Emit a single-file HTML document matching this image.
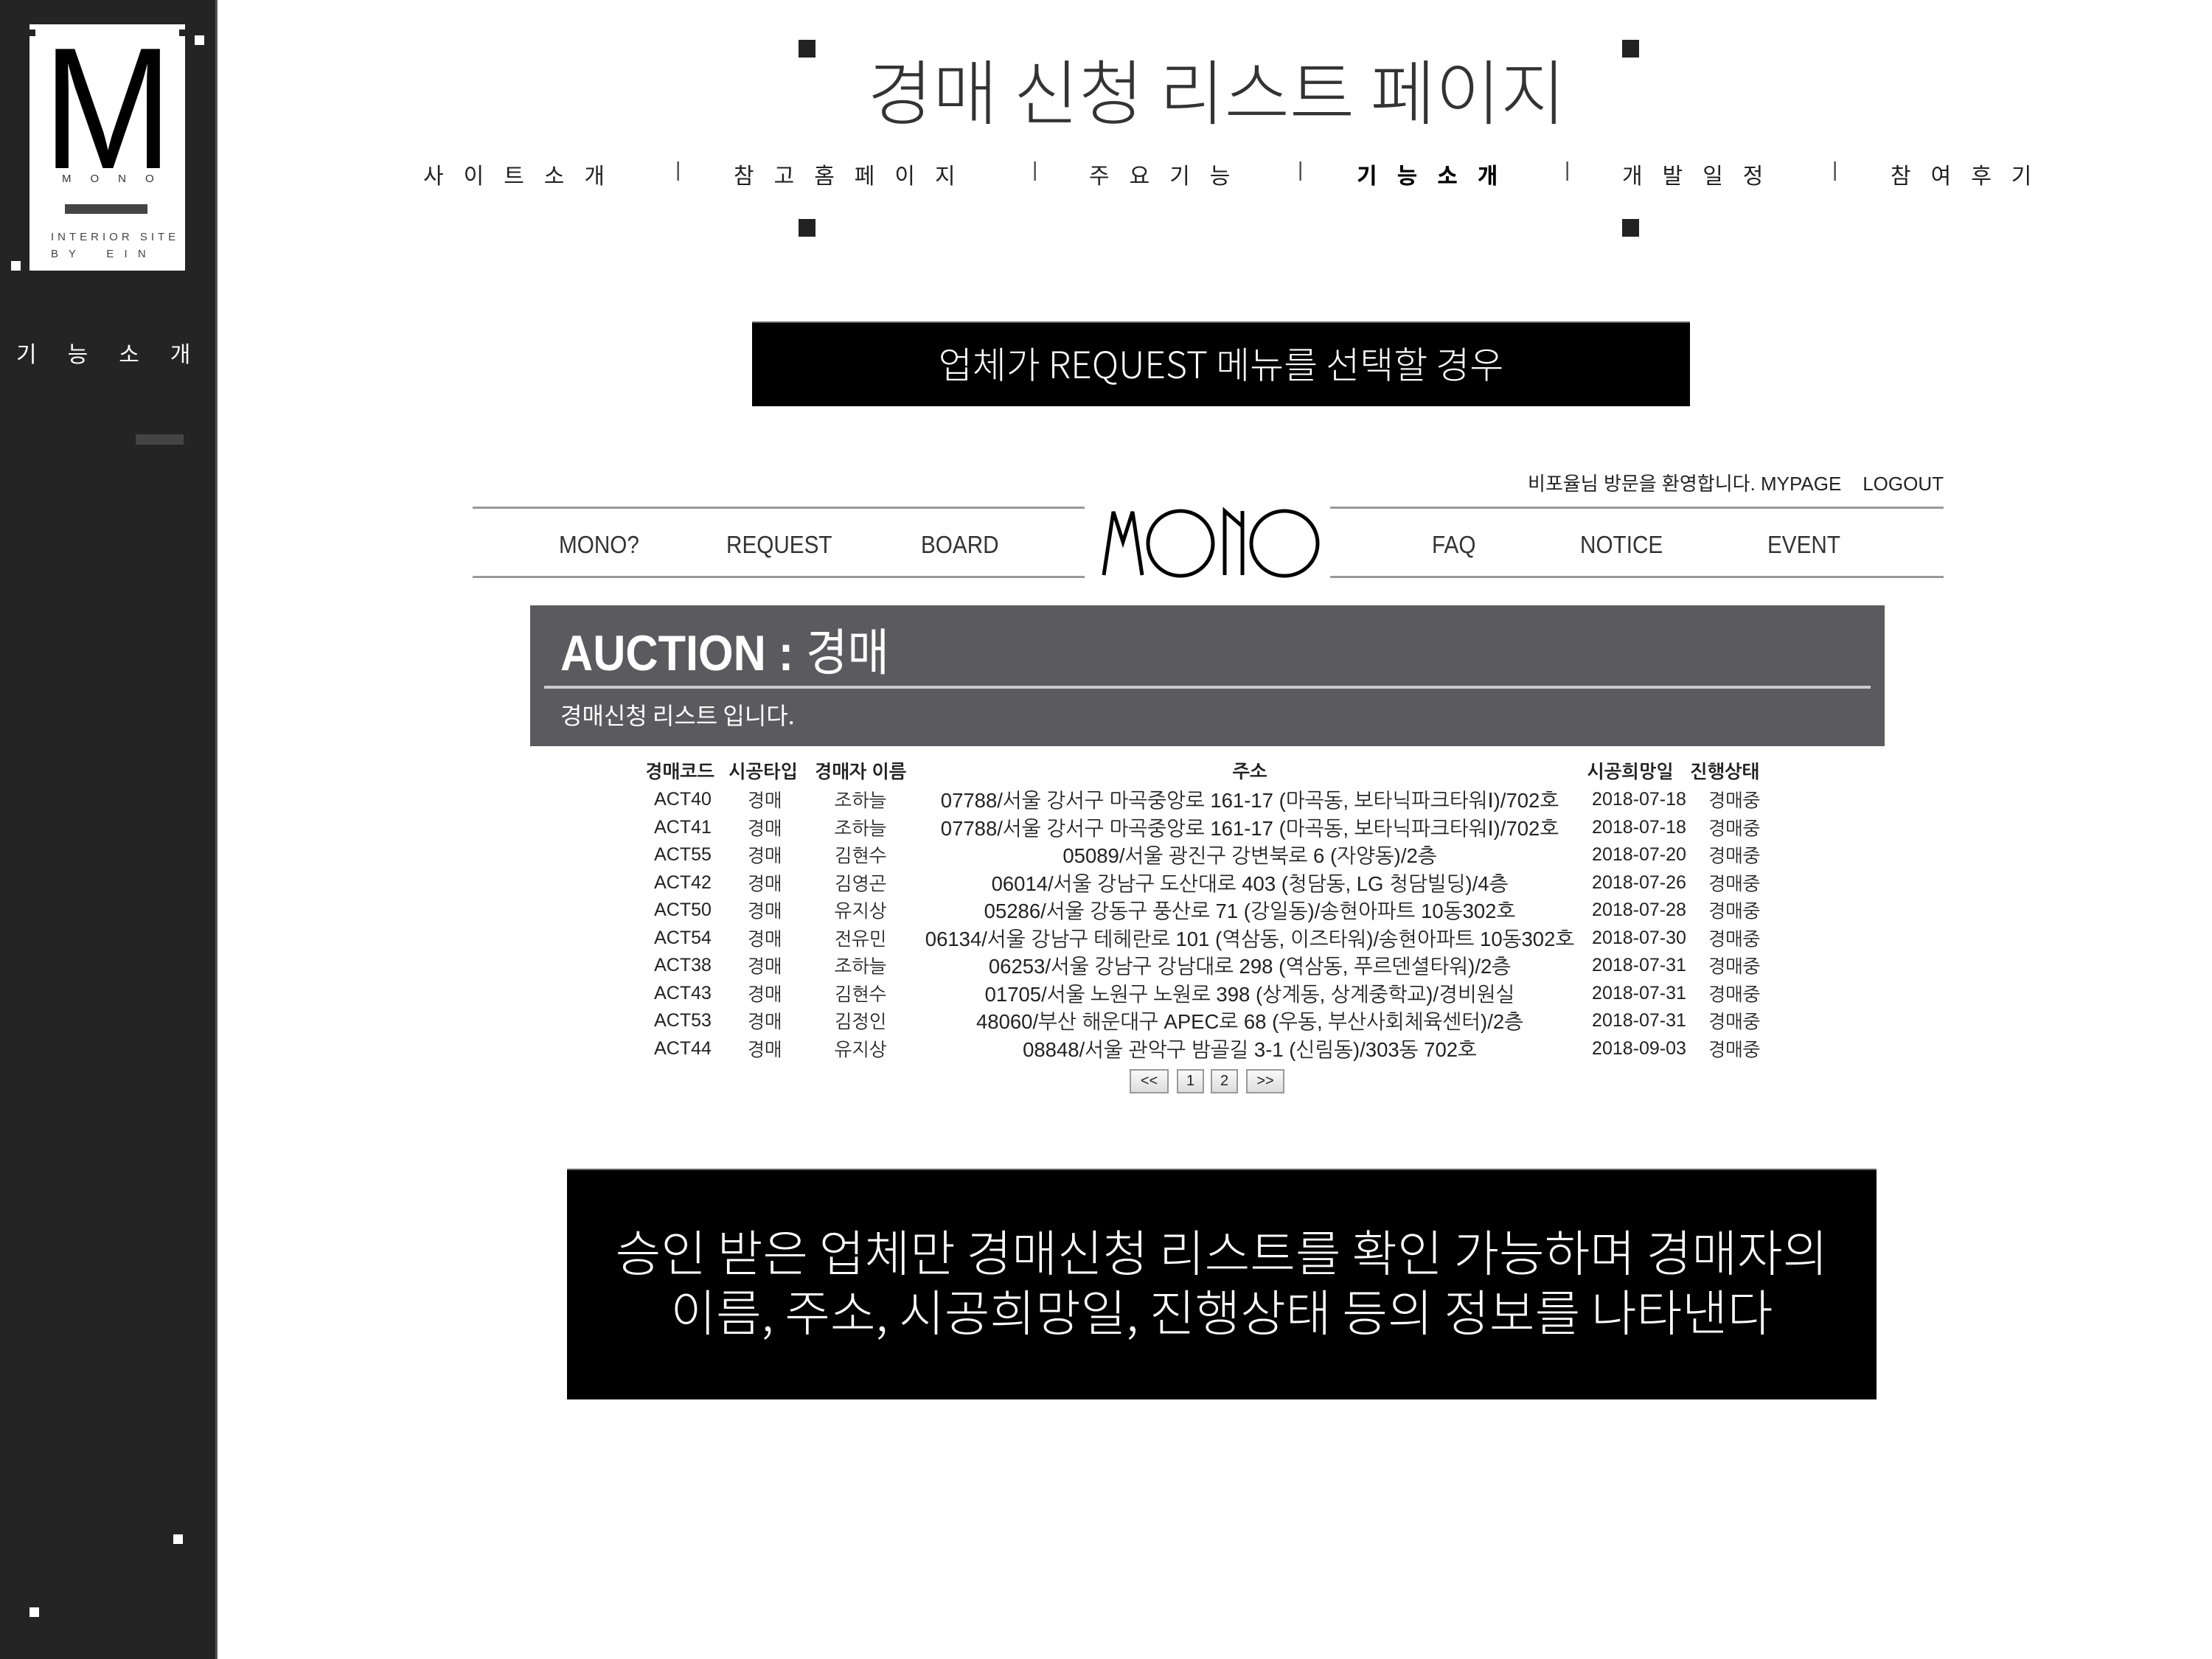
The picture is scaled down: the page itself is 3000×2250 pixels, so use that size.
<!DOCTYPE html>
<html><head><meta charset="utf-8"><style>
*{margin:0;padding:0;box-sizing:border-box}
body{width:3000px;height:2250px;position:relative;background:#fff;overflow:hidden;font-family:"Liberation Sans","Noto Sans CJK KR",sans-serif}
.a{position:absolute}
.sq{position:absolute;background:#fff;width:13px;height:13px}
.mk{position:absolute;background:#222;width:23px;height:24px}
.nav{position:absolute;top:214px;font-size:30px;letter-spacing:27px;color:#222;white-space:nowrap}
.sep{position:absolute;top:214px;font-size:28px;color:#444}
.mn{position:absolute;top:720px;font-size:33px;color:#333;transform:scaleX(.9);transform-origin:left}
.r{position:absolute;left:0;width:3000px;height:36px;font-size:25px;color:#222;font-family:"Liberation Sans","NanumGothic",sans-serif}
.r span{position:absolute;transform:translateX(-50%);white-space:nowrap}
.r span.ad{font-size:27.5px;top:-2px}
.h{font-weight:bold}
.pb{position:absolute;top:1450px;height:33px;border:2px solid #999;background:linear-gradient(#fafafa,#ddd);font-size:20px;text-align:center;line-height:29px;color:#222}
</style></head><body>
<div class="a" style="left:0;top:0;width:295px;height:2250px;background:#242424;border-right:3px solid #555"></div>
<div class="a" style="left:40px;top:33px;width:211px;height:334px;background:#fff"></div>
<div class="a" style="left:40px;top:40px;width:8px;height:9px;background:#242424"></div>
<div class="a" style="left:243px;top:40px;width:8px;height:9px;background:#242424"></div>
<div class="a" style="left:58px;top:62px;font-size:235px;line-height:170px;color:#000;font-weight:normal;transform:scaleX(.9);transform-origin:left">M</div>
<div class="a" style="left:84px;top:234px;font-size:15px;letter-spacing:26px;color:#333">MONO</div>
<div class="a" style="left:88px;top:277px;width:112px;height:13px;background:#444"></div>
<div class="a" style="left:69px;top:313px;font-size:15px;letter-spacing:5px;color:#444">INTERIOR SITE</div>
<div class="a" style="left:69px;top:336px;font-size:15px;letter-spacing:5px;color:#444;white-space:pre">B Y    E I N</div>
<div class="sq" style="left:264px;top:48px"></div>
<div class="sq" style="left:15px;top:354px"></div>
<div class="sq" style="left:235px;top:2081px"></div>
<div class="sq" style="left:40px;top:2180px"></div>
<div class="a" style="left:22px;top:456px;font-size:30px;letter-spacing:42px;color:#fff;font-family:'Noto Sans CJK KR',sans-serif">기능소개</div>
<div class="a" style="left:184px;top:589px;width:65px;height:14px;background:#444"></div>

<div class="mk" style="left:1083px;top:54px"></div>
<div class="mk" style="left:2200px;top:54px"></div>
<div class="mk" style="left:1083px;top:297px"></div>
<div class="mk" style="left:2200px;top:297px"></div>
<div class="a" style="left:1100px;top:55px;width:1100px;text-align:center;font-size:96px;line-height:130px;color:#333;font-family:'Noto Sans CJK KR',sans-serif;font-weight:300">경매 신청 리스트 페이지</div>

<div class="nav" style="left:574px">사이트소개</div>
<div class="sep" style="left:916px">|</div>
<div class="nav" style="left:995px">참고홈페이지</div>
<div class="sep" style="left:1400px">|</div>
<div class="nav" style="left:1477px">주요기능</div>
<div class="sep" style="left:1760px">|</div>
<div class="nav" style="left:1840px;font-weight:bold;color:#000">기능소개</div>
<div class="sep" style="left:2122px">|</div>
<div class="nav" style="left:2200px">개발일정</div>
<div class="sep" style="left:2485px">|</div>
<div class="nav" style="left:2564px">참여후기</div>

<div class="a" style="left:1020px;top:436px;width:1272px;height:115px;background:#000;border-top:2px solid #666;color:#fff;font-size:50px;text-align:center;line-height:108px;font-family:'Noto Sans CJK KR',sans-serif;font-weight:300">업체가 REQUEST 메뉴를 선택할 경우</div>

<div class="a" style="left:1940px;top:636px;width:696px;text-align:right;font-size:26px;color:#222;white-space:nowrap">비포율님 방문을 환영합니다. MYPAGE &nbsp;&nbsp; LOGOUT</div>
<div class="a" style="left:641px;top:687px;width:830px;height:3px;background:#999"></div>
<div class="a" style="left:641px;top:781px;width:830px;height:3px;background:#999"></div>
<div class="a" style="left:1804px;top:687px;width:832px;height:3px;background:#999"></div>
<div class="a" style="left:1804px;top:781px;width:832px;height:3px;background:#999"></div>
<div class="mn" style="left:758px">MONO?</div>
<div class="mn" style="left:985px">REQUEST</div>
<div class="mn" style="left:1249px">BOARD</div>
<div class="mn" style="left:1942px">FAQ</div>
<div class="mn" style="left:2143px">NOTICE</div>
<div class="mn" style="left:2397px">EVENT</div>
<svg class="a" style="left:1480px;top:680px" width="330" height="120" viewBox="0 0 330 120" fill="none" stroke="#000" stroke-width="5">
<polyline points="17,100 30,14 43,55 56,14 69,100"/>
<ellipse cx="121" cy="57" rx="44" ry="44"/>
<path d="M181,100 V13 L205,34 M205,13 V100"/>
<ellipse cx="262" cy="57" rx="45" ry="44"/>
</svg>

<div class="a" style="left:719px;top:821px;width:1837px;height:191px;background:#5b5b5f"></div>
<div class="a" style="left:760px;top:830px;font-size:68px;color:#fff;font-weight:bold;transform:scaleX(.9);transform-origin:left;white-space:nowrap">AUCTION : <span style="font-family:'Noto Sans CJK KR',sans-serif;font-weight:400">경매</span></div>
<div class="a" style="left:738px;top:930px;width:1799px;height:4px;background:#ccc"></div>
<div class="a" style="left:760px;top:946px;font-size:32px;color:#fff;font-family:'Noto Sans CJK KR',sans-serif">경매신청 리스트 입니다.</div>

<div class="r h" style="top:1033px"><span style="left:922px">경매코드</span><span style="left:1035px">시공타입</span><span style="left:1167px">경매자 이름</span><span style="left:1695px">주소</span><span style="left:2211px">시공희망일</span><span style="left:2339px">진행상태</span></div>
<div class="r" style="top:1070px"><span style="left:926px">ACT40</span><span style="left:1037px">경매</span><span style="left:1167px">조하늘</span><span class="ad" style="left:1695px">07788/서울 강서구 마곡중앙로 161-17 (마곡동, 보타닉파크타워Ⅰ)/702호</span><span style="left:2223px">2018-07-18</span><span style="left:2352px">경매중</span></div>
<div class="r" style="top:1108px"><span style="left:926px">ACT41</span><span style="left:1037px">경매</span><span style="left:1167px">조하늘</span><span class="ad" style="left:1695px">07788/서울 강서구 마곡중앙로 161-17 (마곡동, 보타닉파크타워Ⅰ)/702호</span><span style="left:2223px">2018-07-18</span><span style="left:2352px">경매중</span></div>
<div class="r" style="top:1145px"><span style="left:926px">ACT55</span><span style="left:1037px">경매</span><span style="left:1167px">김현수</span><span class="ad" style="left:1695px">05089/서울 광진구 강변북로 6 (자양동)/2층</span><span style="left:2223px">2018-07-20</span><span style="left:2352px">경매중</span></div>
<div class="r" style="top:1183px"><span style="left:926px">ACT42</span><span style="left:1037px">경매</span><span style="left:1167px">김영곤</span><span class="ad" style="left:1695px">06014/서울 강남구 도산대로 403 (청담동, LG 청담빌딩)/4층</span><span style="left:2223px">2018-07-26</span><span style="left:2352px">경매중</span></div>
<div class="r" style="top:1220px"><span style="left:926px">ACT50</span><span style="left:1037px">경매</span><span style="left:1167px">유지상</span><span class="ad" style="left:1695px">05286/서울 강동구 풍산로 71 (강일동)/송현아파트 10동302호</span><span style="left:2223px">2018-07-28</span><span style="left:2352px">경매중</span></div>
<div class="r" style="top:1258px"><span style="left:926px">ACT54</span><span style="left:1037px">경매</span><span style="left:1167px">전유민</span><span class="ad" style="left:1695px">06134/서울 강남구 테헤란로 101 (역삼동, 이즈타워)/송현아파트 10동302호</span><span style="left:2223px">2018-07-30</span><span style="left:2352px">경매중</span></div>
<div class="r" style="top:1295px"><span style="left:926px">ACT38</span><span style="left:1037px">경매</span><span style="left:1167px">조하늘</span><span class="ad" style="left:1695px">06253/서울 강남구 강남대로 298 (역삼동, 푸르덴셜타워)/2층</span><span style="left:2223px">2018-07-31</span><span style="left:2352px">경매중</span></div>
<div class="r" style="top:1333px"><span style="left:926px">ACT43</span><span style="left:1037px">경매</span><span style="left:1167px">김현수</span><span class="ad" style="left:1695px">01705/서울 노원구 노원로 398 (상계동, 상계중학교)/경비원실</span><span style="left:2223px">2018-07-31</span><span style="left:2352px">경매중</span></div>
<div class="r" style="top:1370px"><span style="left:926px">ACT53</span><span style="left:1037px">경매</span><span style="left:1167px">김정인</span><span class="ad" style="left:1695px">48060/부산 해운대구 APEC로 68 (우동, 부산사회체육센터)/2층</span><span style="left:2223px">2018-07-31</span><span style="left:2352px">경매중</span></div>
<div class="r" style="top:1408px"><span style="left:926px">ACT44</span><span style="left:1037px">경매</span><span style="left:1167px">유지상</span><span class="ad" style="left:1695px">08848/서울 관악구 밤골길 3-1 (신림동)/303동 702호</span><span style="left:2223px">2018-09-03</span><span style="left:2352px">경매중</span></div>
<div class="pb" style="left:1532px;width:53px">&lt;&lt;</div>
<div class="pb" style="left:1596px;width:37px">1</div>
<div class="pb" style="left:1642px;width:37px">2</div>
<div class="pb" style="left:1690px;width:52px">&gt;&gt;</div>

<div class="a" style="left:769px;top:1585px;width:1776px;height:313px;background:#000;border-top:2px solid #666;color:#fff;font-size:67px;line-height:81px;text-align:center;padding-top:68px;font-family:'Noto Sans CJK KR',sans-serif;font-weight:300;white-space:nowrap">승인 받은 업체만 경매신청 리스트를 확인 가능하며 경매자의<br>이름, 주소, 시공희망일, 진행상태 등의 정보를 나타낸다</div>
</body></html>
